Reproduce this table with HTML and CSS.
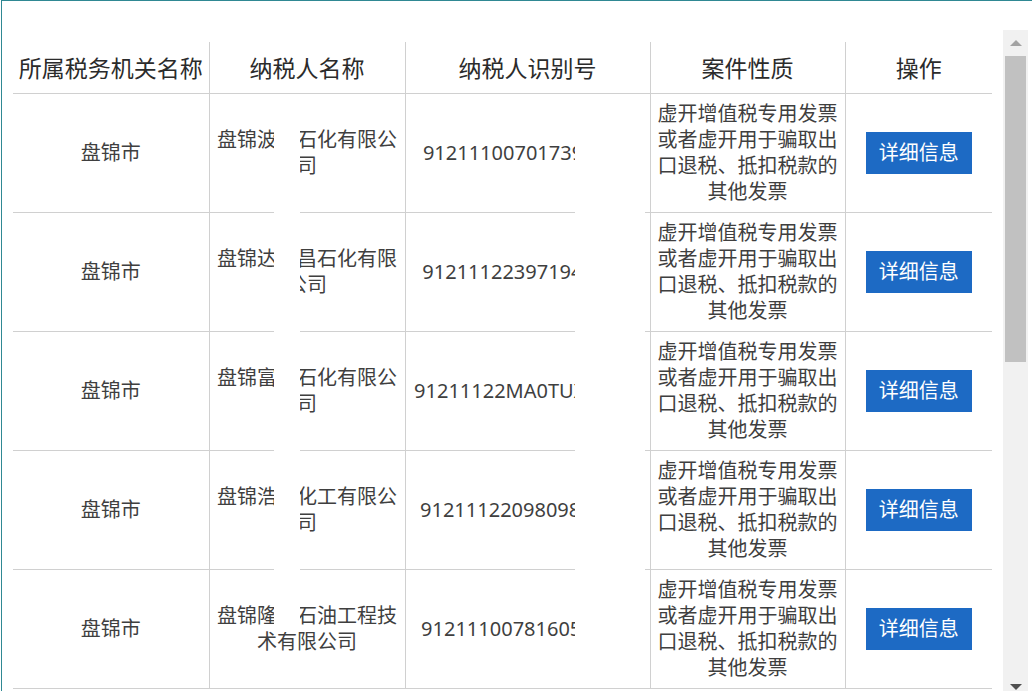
FILE: index.html
```html
<!DOCTYPE html>
<html lang="zh-CN">
<head>
<meta charset="utf-8">
<title>案件列表</title>
<link rel="stylesheet" href="styles.css">
</head>
<body>
<div class="frame">
  <div class="content">
    <div class="table-wrap">
      <table class="grid">
        <colgroup>
          <col class="c-org">
          <col class="c-name">
          <col class="c-id">
          <col class="c-kind">
          <col class="c-op">
        </colgroup>
        <thead>
          <tr>
            <th>所属税务机关名称</th>
            <th>纳税人名称</th>
            <th>纳税人识别号</th>
            <th>案件性质</th>
            <th>操作</th>
          </tr>
        </thead>
        <tbody>
          <tr>
            <td>盘锦市</td>
            <td>盘锦波某石化有限公司</td>
            <td class="id">912111007017392F4X</td>
            <td>虚开增值税专用发票或者虚开用于骗取出口退税、抵扣税款的其他发票</td>
            <td><button class="btn">详细信息</button></td>
          </tr>
          <tr>
            <td>盘锦市</td>
            <td>盘锦达某昌石化有限公司</td>
            <td class="id">912111223971947L2A</td>
            <td>虚开增值税专用发票或者虚开用于骗取出口退税、抵扣税款的其他发票</td>
            <td><button class="btn">详细信息</button></td>
          </tr>
          <tr>
            <td>盘锦市</td>
            <td>盘锦富某石化有限公司</td>
            <td class="id">91211122MA0TUX6Q4B</td>
            <td>虚开增值税专用发票或者虚开用于骗取出口退税、抵扣税款的其他发票</td>
            <td><button class="btn">详细信息</button></td>
          </tr>
          <tr>
            <td>盘锦市</td>
            <td>盘锦浩某化工有限公司</td>
            <td class="id">912111220980983C5N</td>
            <td>虚开增值税专用发票或者虚开用于骗取出口退税、抵扣税款的其他发票</td>
            <td><button class="btn">详细信息</button></td>
          </tr>
          <tr>
            <td>盘锦市</td>
            <td>盘锦隆某石油工程技术有限公司</td>
            <td class="id">912111007816052D7T</td>
            <td>虚开增值税专用发票或者虚开用于骗取出口退税、抵扣税款的其他发票</td>
            <td><button class="btn">详细信息</button></td>
          </tr>
        </tbody>
      </table>
      <div class="mask mask-name"></div>
      <div class="mask mask-id"></div>
    </div>
    <div class="scrollbar">
      <div class="sb-btn"><span class="tri-up"></span></div>
      <div class="sb-thumb"></div>
      <div class="sb-rest"></div>
      <div class="sb-btn"><span class="tri-down"></span></div>
    </div>
  </div>
</div>
</body>
</html>
```

FILE: styles.css
```css
html, body {
  margin: 0;
  padding: 0;
  background: #ffffff;
  overflow: hidden;
}

body {
  font-family: "Noto Sans", "Noto Sans CJK SC", sans-serif;
  color: #3c3c3c;
}

.frame {
  margin-left: 1px;
  height: 690px;
  border-top: 1px solid #2f8893;
  border-left: 1px solid #2f8893;
  overflow: hidden;
}

.content {
  display: flex;
  align-items: flex-start;
}

.table-wrap {
  position: relative;
  margin-left: 11px;
  margin-top: 41px;
  width: 979px;
  flex: none;
}

.grid {
  border-collapse: collapse;
  table-layout: fixed;
  width: 979px;
}

.c-org { width: 196px; }
.c-name { width: 196px; }
.c-id { width: 245px; }
.c-kind { width: 195px; }
.c-op { width: 147px; }

.grid th,
.grid td {
  border-right: 1px solid #d0d0d0;
  border-bottom: 1px solid #d0d0d0;
  text-align: center;
  vertical-align: middle;
}

.grid th:last-child,
.grid td:last-child {
  border-right: none;
}

.grid th {
  font-size: 23px;
  font-weight: normal;
  line-height: 30px;
  padding: 11px 2px 10px;
  color: #2b2b2b;
}

.grid td {
  font-size: 20px;
  line-height: 26px;
  padding: 7px 7px;
  color: #3f3f3f;
}

.grid td.id {
  white-space: nowrap;
  padding: 7px 4px 7px 0;
}

.btn {
  display: inline-block;
  height: 42px;
  padding: 0 13px;
  border: none;
  border-radius: 0;
  background: #1d6ac4;
  color: #ffffff;
  font-family: "Noto Sans", "Noto Sans CJK SC", sans-serif;
  font-size: 20px;
  line-height: 42px;
  vertical-align: middle;
}

.mask {
  position: absolute;
  top: 54px;
  background: #ffffff;
}

.mask-name {
  left: 261px;
  width: 26px;
  height: 536px;
}

.mask-id {
  left: 562px;
  width: 70px;
  height: 591px;
}

.scrollbar {
  flex: none;
  margin-left: 11px;
  margin-top: 29px;
  width: 25px;
  height: 670px;
  background: #f1f1f1;
  display: flex;
  flex-direction: column;
}

.sb-btn {
  height: 26px;
  display: flex;
  align-items: center;
  justify-content: center;
  flex: none;
}

.sb-thumb {
  height: 306px;
  margin-left: 2px;
  width: 21px;
  background: #c1c1c1;
  flex: none;
}

.sb-rest {
  flex: 1;
}

.tri-up {
  width: 0;
  height: 0;
  border-left: 6px solid transparent;
  border-right: 6px solid transparent;
  border-bottom: 6px solid #a3a3a3;
}

.tri-down {
  width: 0;
  height: 0;
  border-left: 6px solid transparent;
  border-right: 6px solid transparent;
  border-top: 6px solid #505050;
}
```
